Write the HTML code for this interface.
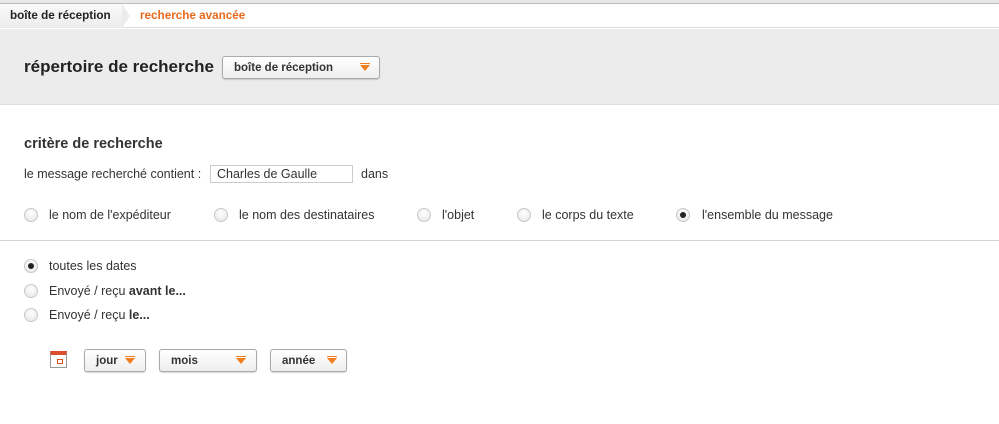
<!DOCTYPE html>
<html><head><meta charset="utf-8"><style>
*{margin:0;padding:0;box-sizing:border-box}
body{width:999px;height:424px;background:#fff;font-family:"Liberation Sans",Arial,sans-serif;color:#333;position:relative;overflow:hidden}
.a{position:absolute;white-space:nowrap}
.r{position:absolute;width:14px;height:14px;border-radius:50%;border:1px solid #c8c8c8;background:radial-gradient(circle at 50% 35%,#fff,#e4e4e4)}
.r.on::after{content:"";position:absolute;left:3px;top:3px;width:6px;height:6px;border-radius:50%;background:#222}
.t{font-size:12.5px;color:#333}
.dd{position:absolute;height:23px;border:1px solid #aaa;border-radius:3px;background:linear-gradient(#fff,#eee);font-size:11.5px;font-weight:bold;color:#333;padding:5px 0 0 11px;box-shadow:0 1px 1px rgba(0,0,0,.15)}
.ar{position:absolute;top:8px;width:0;height:0;border-left:5px solid transparent;border-right:5px solid transparent;border-top:6px solid #f07d1e}
.ar::before{content:"";position:absolute;left:-5px;top:-8px;width:10px;height:1px;background:#f07d1e}
</style></head><body>
<div class="a" style="left:0;top:0;width:999px;height:4px;background:#e8e8e8;border-bottom:1px solid #bbb"></div>
<div class="a" style="left:0;top:4px;width:999px;height:24px;border-bottom:1px solid #ddd;background:#fff"></div>
<div class="a" style="left:0;top:4px;width:122px;height:24px;background:linear-gradient(#fafafa,#ececec)"></div>
<div class="a" style="left:122px;top:4px;width:0;height:0;border-top:12px solid transparent;border-bottom:12px solid transparent;border-left:8px solid #ececec"></div>
<div class="a" style="left:10px;top:9px;font-size:11.7px;font-weight:bold;color:#222">boîte de réception</div>
<div class="a" style="left:140px;top:9px;font-size:11.7px;font-weight:bold;color:#e8691c">recherche avancée</div>
<div class="a" style="left:0;top:29px;width:999px;height:76px;background:#ececec;border-bottom:1px solid #ddd"></div>
<div class="a" style="left:24px;top:57px;font-size:17px;font-weight:bold;color:#222">répertoire de recherche</div>
<div class="dd" style="left:222px;top:56px;width:158px">boîte de réception<span class="ar" style="left:137px"></span></div>
<div class="a" style="left:24px;top:136px;font-size:14.5px;font-weight:bold;color:#333">critère de recherche</div>
<div class="a t" style="left:24px;top:167px">le message recherché contient :</div>
<div class="a" style="left:210px;top:165px;width:143px;height:18px;border:1px solid #ccc;font-size:12.5px;padding:1px 0 0 6px;color:#333">Charles de Gaulle</div>
<div class="a t" style="left:361px;top:167px">dans</div>
<div class="r" style="left:24px;top:208px"></div><div class="a t" style="left:49px;top:208px">le nom de l'expéditeur</div>
<div class="r" style="left:214px;top:208px"></div><div class="a t" style="left:239px;top:208px">le nom des destinataires</div>
<div class="r" style="left:417px;top:208px"></div><div class="a t" style="left:442px;top:208px">l'objet</div>
<div class="r" style="left:517px;top:208px"></div><div class="a t" style="left:542px;top:208px">le corps du texte</div>
<div class="r on" style="left:676px;top:208px"></div><div class="a t" style="left:702px;top:208px">l'ensemble du message</div>
<div class="a" style="left:0;top:240px;width:999px;height:1px;background:#d4d4d4"></div>
<div class="r on" style="left:24px;top:259px"></div><div class="a t" style="left:49px;top:259px">toutes les dates</div>
<div class="r" style="left:24px;top:284px"></div><div class="a t" style="left:49px;top:284px">Envoyé / reçu <b>avant le...</b></div>
<div class="r" style="left:24px;top:308px"></div><div class="a t" style="left:49px;top:308px">Envoyé / reçu <b>le...</b></div>
<div class="a" style="left:50px;top:351px;width:17px;height:17px;border:1px solid #999;border-top:4px solid #d9502a;background:#fff"><div style="position:absolute;left:6px;top:4px;width:6px;height:5px;border:1px solid #d9502a"></div></div>
<div class="dd" style="left:84px;top:349px;width:62px">jour<span class="ar" style="left:40px"></span></div>
<div class="dd" style="left:159px;top:349px;width:98px">mois<span class="ar" style="left:76px"></span></div>
<div class="dd" style="left:270px;top:349px;width:77px">année<span class="ar" style="left:56px"></span></div>
</body></html>
